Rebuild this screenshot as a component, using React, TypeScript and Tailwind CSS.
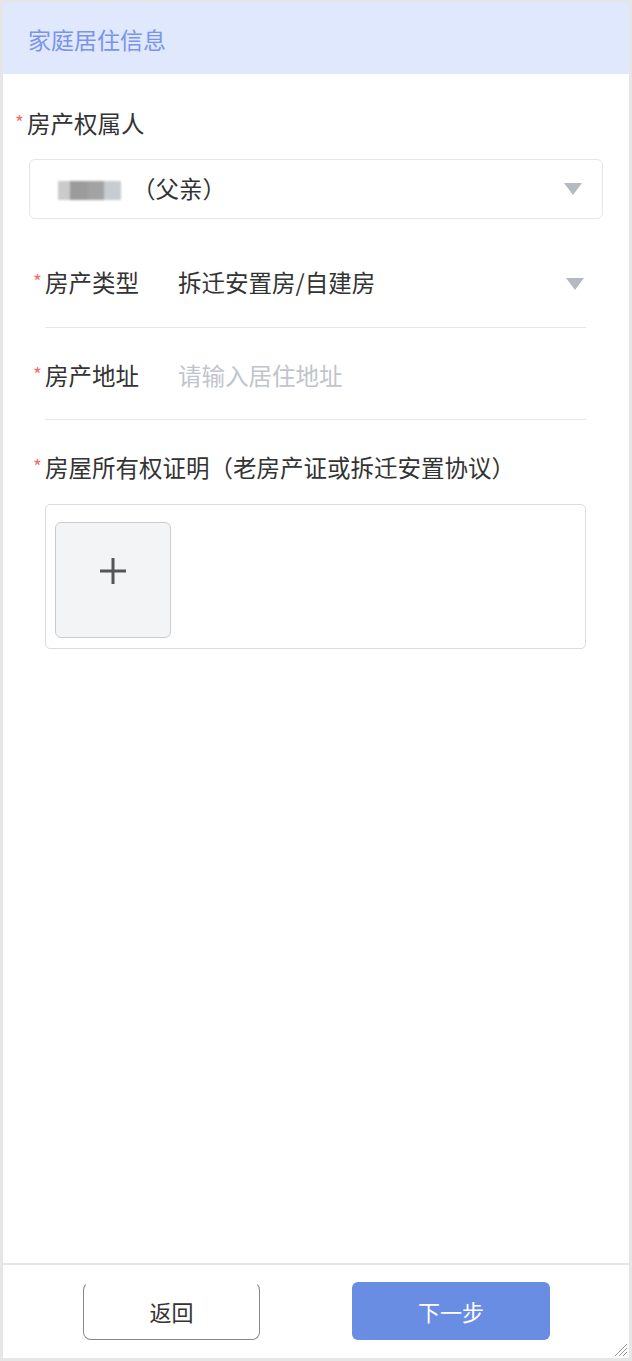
import React from "react";

const font = { fontFamily: '"Noto Sans CJK SC", "Noto Sans", sans-serif' };

function Tri() {
  return (
    <svg width="20" height="14" viewBox="0 0 20 14" className="shrink-0">
      <polygon points="1,1 19,1 10,13" fill="#b4b9c2" />
    </svg>
  );
}

function Star({ className = "" }: { className?: string }) {
  return (
    <span className={"text-[#f56c6c] text-[19px] leading-none w-[12px] shrink-0 -mt-[4px] " + className}>*</span>
  );
}

export default function App() {
  return (
    <div
      style={font}
      className="relative w-full h-[1361px] bg-white border-[#e6e6e6] border-t-[2px] border-x-[3px] border-b-[3px] flex flex-col text-[#333333]"
    >
      <div className="h-[72px] bg-[#dfe8fd] flex items-center pl-[25px] pt-[2px] shrink-0">
        <span className="text-[23px] text-[#7b93ec]">家庭居住信息</span>
      </div>

      <div className="flex-1 flex flex-col">
        <div className="mt-[35px] pl-[12px] flex items-center h-[28px]">
          <Star />
          <span className="text-[23.5px] leading-[28px]">房产权属人</span>
        </div>

        <div className="mt-[22px] mx-[26px] h-[60px] border border-[#e4e7ed] rounded-[6px] flex items-center pl-[28px] pr-[19px]">
          <div className="flex items-center h-[19px] blur-[1.2px] mr-[11px] mt-[2px]">
            <div className="w-[12px] h-full bg-[#cbcbcb]" />
            <div className="w-[18px] h-full bg-[#9b9b9b]" />
            <div className="w-[16px] h-full bg-[#a3a3a5]" />
            <div className="w-[17px] h-full bg-[#c8cbcf]" />
          </div>
          <span className="text-[23.5px] leading-[28px] flex-1 -mt-[2px]">（父亲）</span>
          <Tri />
        </div>

        <div className="mt-[17px] ml-[42px] mr-[43px] border-b border-[#e4e7ed] pt-[32px] pb-[31px] flex items-center">
          <Star className="-ml-[12px]" />
          <span className="text-[23.5px] leading-[28px] w-[133px] shrink-0">房产类型</span>
          <span className="text-[23.5px] leading-[28px] flex-1">拆迁安置房/自建房</span>
          <span className="mr-[1px] mt-[3px]"><Tri /></span>
        </div>

        <div className="ml-[42px] mr-[43px] border-b border-[#e4e7ed] pt-[33px] pb-[30px] flex items-center">
          <Star className="-ml-[12px]" />
          <span className="text-[23.5px] leading-[28px] w-[133px] shrink-0">房产地址</span>
          <span className="text-[23.5px] leading-[28px] flex-1 text-[#c0c4cc]">请输入居住地址</span>
        </div>

        <div className="ml-[42px] mr-[43px] pt-[33px] flex items-center">
          <Star className="-ml-[12px]" />
          <span className="text-[23.5px] leading-[28px]">房屋所有权证明（老房产证或拆迁安置协议）</span>
        </div>

        <div className="mt-[23px] ml-[42px] mr-[43px] h-[145px] border border-[#dcdcdc] rounded-[5px] pl-[9px] pt-[17px]">
          <div className="w-[116px] h-[116px] bg-[#f3f4f6] border border-[#cccccc] rounded-[6px] flex items-center justify-center pb-[18px]">
            <svg width="28" height="28" viewBox="0 0 28 28">
              <path d="M14 1 V27 M1 14 H27" stroke="#555555" strokeWidth="3" />
            </svg>
          </div>
        </div>
      </div>

      <div className="h-[95px] shrink-0 border-t-[2px] border-[#e6e6e6] flex items-start pt-[17px]">
        <button className="ml-[80px] w-[177px] h-[58px] border-[1.5px] border-[#888888] [border-top-color:#ffffff] rounded-[8px] text-[22px] text-[#333333] flex items-center justify-center bg-white">
          返回
        </button>
        <button className="ml-[92px] w-[198px] h-[58px] rounded-[6px] bg-[#6a8de4] text-white text-[22px] flex items-center justify-center">
          下一步
        </button>
      </div>

      <svg className="absolute right-[1px] bottom-[1px]" width="16" height="16" viewBox="0 0 16 16">
        <path d="M15 3 L3 15 M15 7 L7 15 M15 11 L11 15" stroke="#9a9a9a" strokeWidth="1" />
      </svg>
    </div>
  );
}
